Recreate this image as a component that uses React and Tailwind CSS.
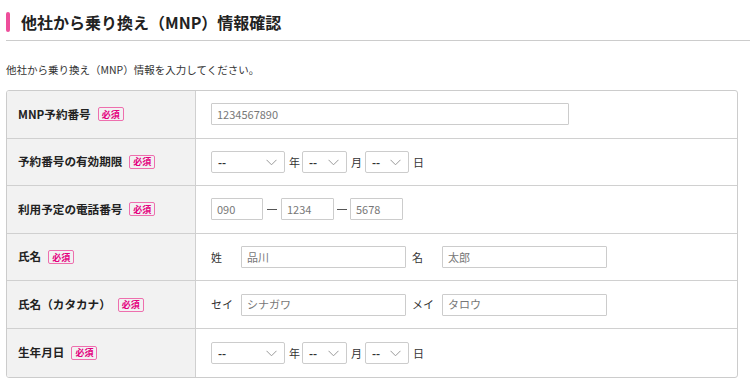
const font = { fontFamily: '"Noto Sans CJK JP", "Noto Sans", sans-serif' };

function Required() {
  return (
    <span className="ml-[7px] inline-flex h-[14px] items-center rounded-[2px] border border-[#ee6fae] px-[3px] text-[9px] font-bold leading-none text-[#e4007f]">
      必須
    </span>
  );
}

function Chevron() {
  return (
    <svg width="11" height="7" viewBox="0 0 11 7" className="absolute right-[7px] top-[7px]">
      <path d="M0.5 0.8 L5.5 5.8 L10.5 0.8" fill="none" stroke="#999" strokeWidth="1" />
    </svg>
  );
}

function Select({ width }) {
  return (
    <div className={`relative h-[22px] ${width} rounded-[2px] border border-[#ccc] bg-white`}>
      <span className="absolute left-[6px] top-[3px] text-[11px] font-bold leading-[14px] text-[#333]">--</span>
      <Chevron />
    </div>
  );
}

function TextBox({ value, width }) {
  return (
    <div className={`flex h-[22px] ${width} items-center rounded-[1px] border border-[#ccc] bg-white px-[5px] text-[11px] text-[#777]`}>
      {value}
    </div>
  );
}

function DateRow() {
  return (
    <div className="flex items-center text-[11px] text-[#333]">
      <Select width="w-[74px]" />
      <span className="ml-[4px] mr-[2px]">年</span>
      <Select width="w-[45px]" />
      <span className="ml-[4px] mr-[3px]">月</span>
      <Select width="w-[44px]" />
      <span className="ml-[4px]">日</span>
    </div>
  );
}

function Row({ label, children, last }) {
  return (
    <div className={`flex h-[47.6px] ${last ? '' : 'border-b border-[#d0d0d0]'}`}>
      <div className="flex w-[189px] shrink-0 items-center border-r border-[#d0d0d0] bg-[#f2f2f2] pl-[11px] text-[11.6px] font-bold text-[#222]">
        {label}
        <Required />
      </div>
      <div className="flex items-center pl-[15px]">{children}</div>
    </div>
  );
}

function NamePair({ a, av, b, bv }) {
  return (
    <div className="flex items-center text-[11px] text-[#333]">
      <span className="w-[30px]">{a}</span>
      <TextBox value={av} width="w-[165px]" />
      <span className="ml-[6px] w-[30px]">{b}</span>
      <TextBox value={bv} width="w-[165px]" />
    </div>
  );
}

export default function App() {
  return (
    <div className="h-[386px] w-[750px] overflow-hidden bg-white" style={font}>
      <div className="ml-[6px] border-b border-[#ccc] pb-[8px] pt-[12px]">
        <div className="flex h-[20px] items-center">
          <div className="h-[20px] w-[4px] rounded-[2px] bg-[#ee4e9b]" />
          <h1 className="ml-[11px] text-[16px] font-bold leading-none text-[#222]">他社から乗り換え（MNP）情報確認</h1>
        </div>
      </div>
      <p className="ml-[6px] mt-[22px] text-[10.5px] leading-[14px] text-[#333]">他社から乗り換え（MNP）情報を入力してください。</p>
      <div className="ml-[6px] mt-[13px] w-[732px] overflow-hidden rounded-[3px] border border-[#ccc]">
        <Row label="MNP予約番号">
          <TextBox value="1234567890" width="w-[358px]" />
        </Row>
        <Row label="予約番号の有効期限">
          <DateRow />
        </Row>
        <Row label="利用予定の電話番号">
          <div className="flex items-center">
            <TextBox value="090" width="w-[52px]" />
            <span className="mx-[4px] h-px w-[10px] bg-[#555]" />
            <TextBox value="1234" width="w-[53px]" />
            <span className="mx-[3px] h-px w-[10px] bg-[#555]" />
            <TextBox value="5678" width="w-[53px]" />
          </div>
        </Row>
        <Row label="氏名">
          <NamePair a="姓" av="品川" b="名" bv="太郎" />
        </Row>
        <Row label="氏名（カタカナ）">
          <NamePair a="セイ" av="シナガワ" b="メイ" bv="タロウ" />
        </Row>
        <Row label="生年月日" last>
          <DateRow />
        </Row>
      </div>
    </div>
  );
}
